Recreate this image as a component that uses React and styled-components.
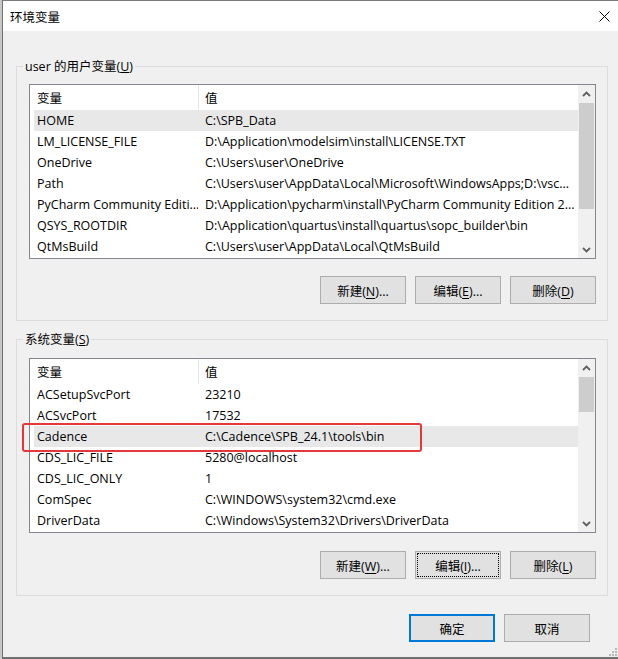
import React from 'react';
import styled, { createGlobalStyle } from 'styled-components';

const GlobalStyle = createGlobalStyle`
  html, body {
    margin: 0;
    padding: 0;
    background: #c8c8c8;
  }
  body {
    font-family: "Open Sans", "Noto Sans CJK SC", sans-serif;
    font-size: 12.5px;
    color: #000;
  }
`;

const Window = styled.div`
  position: relative;
  box-sizing: border-box;
  height: 659px;
  margin-left: 2px;
  border-left: 1px solid #6f6f6f;
  border-top: 1px solid #7a7a7a;
  border-bottom: 2px solid #6f6f6f;
  background: #f0f0f0;
  display: flex;
  flex-direction: column;
  overflow: hidden;
`;

const TitleBar = styled.div`
  height: 30px;
  flex-shrink: 0;
  background: #fff;
  display: flex;
  align-items: center;
  justify-content: space-between;
  padding: 0 8px 0 7px;
`;

const Title = styled.span`
  font-family: "Noto Sans CJK SC", sans-serif;
  font-size: 12.5px;
`;

const Client = styled.div`
  flex: 1;
  display: flex;
  flex-direction: column;
  padding: 35px 10px 0 13px;
`;

const GroupBox = styled.div`
  display: flex;
  flex-direction: column;
  border: 1px solid #dcdcdc;
  padding: 0 11px 16px 12px;
  margin-top: ${(p) => p.$top || 0}px;
`;

const Caption = styled.span`
  align-self: flex-start;
  margin: -8px 0 0 -6px;
  padding: 0 2px;
  line-height: 16px;
  height: 16px;
  background: #f0f0f0;
`;

const ListView = styled.div`
  position: relative;
  height: 175px;
  margin-top: ${(p) => p.$top}px;
  box-sizing: border-box;
  border: 1px solid #828790;
  background: #fff;
  display: flex;
`;

const Table = styled.div`
  flex: 1;
  display: flex;
  flex-direction: column;
  overflow: hidden;
`;

const Header = styled.div`
  height: 25px;
  flex-shrink: 0;
  display: flex;
`;

const HeaderCell = styled.div`
  display: flex;
  align-items: center;
  box-sizing: border-box;
  flex: ${(p) => (p.$first ? 'none' : 1)};
  width: ${(p) => (p.$first ? '169px' : 'auto')};
  padding-left: ${(p) => (p.$first ? 7 : 6)}px;
  border-right: ${(p) => (p.$first ? '1px solid #e5e5e5' : 'none')};
`;

const Row = styled.div`
  height: 21px;
  flex-shrink: 0;
  margin-left: 4px;
  display: flex;
  align-items: center;
  background: ${(p) => (p.$selected ? '#e8e8e8' : 'transparent')};
`;

const NameCell = styled.div`
  width: 164px;
  flex-shrink: 0;
  box-sizing: border-box;
  padding-left: 3px;
  white-space: nowrap;
  overflow: hidden;
`;

const ValueCell = styled.div`
  flex: 1;
  padding-left: 7px;
  white-space: nowrap;
  overflow: hidden;
`;

const ScrollBar = styled.div`
  width: 17px;
  flex-shrink: 0;
  background: #f0f0f0;
  display: flex;
  flex-direction: column;
`;

const ArrowButton = styled.div`
  height: 17px;
  display: flex;
  align-items: center;
  justify-content: center;
  margin-top: ${(p) => (p.$bottom ? 'auto' : 0)};
`;

const Thumb = styled.div`
  margin: 1px 1px 0;
  background: #cdcdcd;
`;

const Annotation = styled.div`
  position: absolute;
  left: -8px;
  top: 64px;
  width: 400px;
  height: 29px;
  box-sizing: border-box;
  border: 2px solid #e4393c;
  border-radius: 3px;
  pointer-events: none;
`;

const ButtonRow = styled.div`
  display: flex;
  justify-content: flex-end;
  gap: 9px;
  margin-top: ${(p) => p.$top}px;
  padding-right: ${(p) => p.$right || 0}px;
`;

const Button = styled.button`
  width: 86px;
  height: 28px;
  padding: 0;
  box-sizing: border-box;
  font-family: "Open Sans", "Noto Sans CJK SC", sans-serif;
  font-size: 12.5px;
  color: #000;
  background: #e1e1e1;
  border: ${(p) => (p.$default ? '2px solid #0078d7' : '1px solid #adadad')};
  outline: ${(p) => (p.$focused ? '1px dotted #000' : 'none')};
  outline-offset: -3px;

  u {
    text-decoration: underline;
    text-underline-offset: 2px;
  }
`;

const Grip = styled.svg`
  position: absolute;
  right: 1px;
  bottom: 1px;
`;

const userVars = [
  ['HOME', 'C:\\SPB_Data', true],
  ['LM_LICENSE_FILE', 'D:\\Application\\modelsim\\install\\LICENSE.TXT'],
  ['OneDrive', 'C:\\Users\\user\\OneDrive'],
  ['Path', 'C:\\Users\\user\\AppData\\Local\\Microsoft\\WindowsApps;D:\\vsc...'],
  ['PyCharm Community Editi...', 'D:\\Application\\pycharm\\install\\PyCharm Community Edition 2...'],
  ['QSYS_ROOTDIR', 'D:\\Application\\quartus\\install\\quartus\\sopc_builder\\bin'],
  ['QtMsBuild', 'C:\\Users\\user\\AppData\\Local\\QtMsBuild'],
];

const systemVars = [
  ['ACSetupSvcPort', '23210'],
  ['ACSvcPort', '17532'],
  ['Cadence', 'C:\\Cadence\\SPB_24.1\\tools\\bin', true],
  ['CDS_LIC_FILE', '5280@localhost'],
  ['CDS_LIC_ONLY', '1'],
  ['ComSpec', 'C:\\WINDOWS\\system32\\cmd.exe'],
  ['DriverData', 'C:\\Windows\\System32\\Drivers\\DriverData'],
];

const Chevron = ({ down }) => (
  <svg width="9" height="6" viewBox="0 0 9 6">
    <polyline
      points={down ? '1,1 4.5,4.5 8,1' : '1,5 4.5,1.5 8,5'}
      fill="none"
      stroke="#606060"
      strokeWidth="1.8"
    />
  </svg>
);

const VariableList = ({ rows, top, thumb, children }) => (
  <ListView $top={top}>
    <Table>
      <Header>
        <HeaderCell $first>变量</HeaderCell>
        <HeaderCell>值</HeaderCell>
      </Header>
      {rows.map(([name, value, selected]) => (
        <Row key={name} $selected={selected}>
          <NameCell>{name}</NameCell>
          <ValueCell>{value}</ValueCell>
        </Row>
      ))}
    </Table>
    <ScrollBar>
      <ArrowButton>
        <Chevron />
      </ArrowButton>
      <Thumb style={{ height: thumb }} />
      <ArrowButton $bottom>
        <Chevron down />
      </ArrowButton>
    </ScrollBar>
    {children}
  </ListView>
);

const App = () => (
  <>
    <GlobalStyle />
    <Window>
      <TitleBar>
        <Title>环境变量</Title>
        <svg width="11" height="11" viewBox="0 0 11 11">
          <path d="M0.5 0.5 L10.5 10.5 M10.5 0.5 L0.5 10.5" stroke="#000" strokeWidth="1" />
        </svg>
      </TitleBar>
      <Client>
        <GroupBox>
          <Caption>
            user 的用户变量(<u>U</u>)
          </Caption>
          <VariableList rows={userVars} top={9} thumb={106} />
          <ButtonRow $top={17}>
            <Button>新建(<u>N</u>)...</Button>
            <Button>编辑(<u>E</u>)...</Button>
            <Button>删除(<u>D</u>)</Button>
          </ButtonRow>
        </GroupBox>

        <GroupBox $top={18}>
          <Caption>
            系统变量(<u>S</u>)
          </Caption>
          <VariableList rows={systemVars} top={10} thumb={35}>
            <Annotation />
          </VariableList>
          <ButtonRow $top={18}>
            <Button>新建(<u>W</u>)...</Button>
            <Button $focused>编辑(<u>I</u>)...</Button>
            <Button>删除(<u>L</u>)</Button>
          </ButtonRow>
        </GroupBox>

        <ButtonRow $top={18} $right={18}>
          <Button $default>确定</Button>
          <Button>取消</Button>
        </ButtonRow>
      </Client>
      <Grip width="8" height="8" viewBox="0 0 8 8">
        <rect x="6" y="0" width="2" height="2" fill="#b8b8b8" />
        <rect x="3" y="3" width="2" height="2" fill="#b8b8b8" />
        <rect x="6" y="3" width="2" height="2" fill="#b8b8b8" />
        <rect x="0" y="6" width="2" height="2" fill="#b8b8b8" />
        <rect x="3" y="6" width="2" height="2" fill="#b8b8b8" />
        <rect x="6" y="6" width="2" height="2" fill="#b8b8b8" />
      </Grip>
    </Window>
  </>
);

export default App;
